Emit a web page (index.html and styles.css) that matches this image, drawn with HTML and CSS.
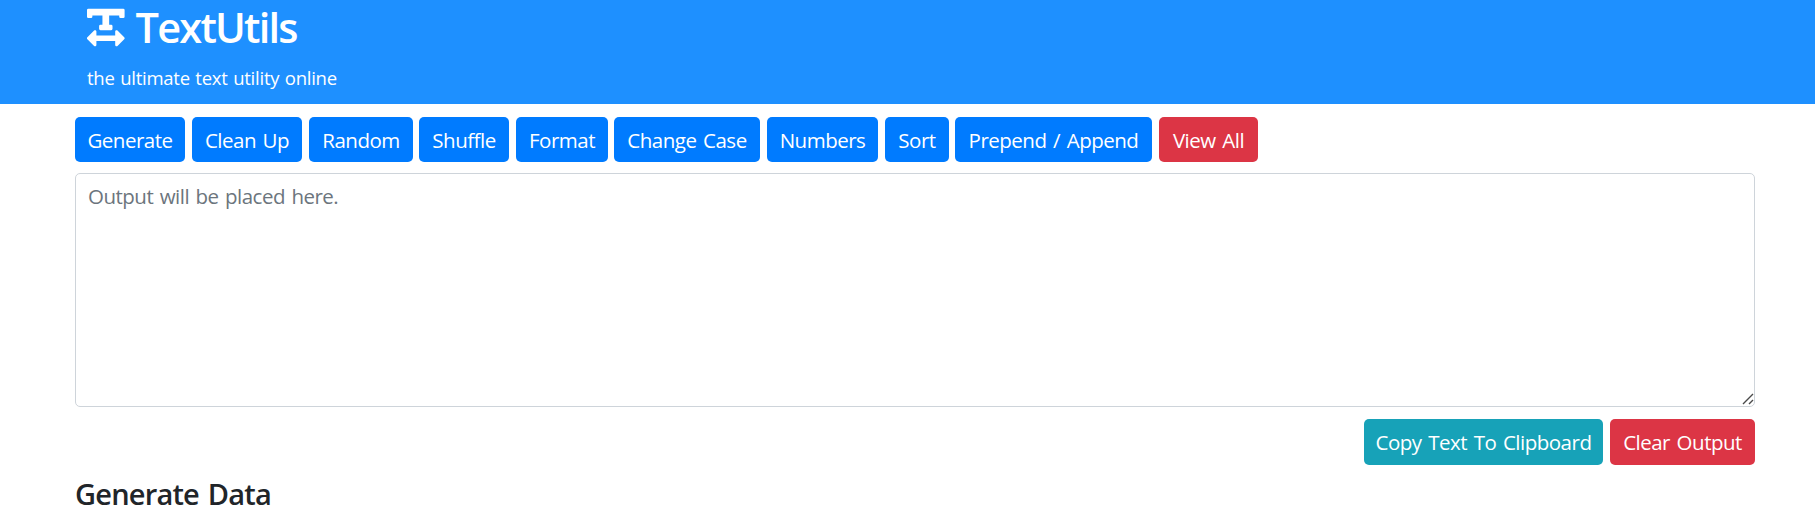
FILE: index.html
```html
<!DOCTYPE html>
<html lang="en">
<head>
<meta charset="utf-8">
<title>TextUtils</title>
<link rel="stylesheet" href="styles.css">
</head>
<body>
<header class="header">
  <h1 class="brand">
    <svg class="brand-icon" viewBox="0 0 448 512" fill="currentColor" aria-hidden="true"><path d="M432 32H16A16 16 0 0 0 0 48v80a16 16 0 0 0 16 16h32a16 16 0 0 0 16-16v-16h120v112h-24a16 16 0 0 0-16 16v32a16 16 0 0 0 16 16h128a16 16 0 0 0 16-16v-32a16 16 0 0 0-16-16h-24V112h120v16a16 16 0 0 0 16 16h32a16 16 0 0 0 16-16V48a16 16 0 0 0-16-16zm-68.69 260.69C354 283.36 336 288.36 336 304v48H112v-48c0-14.31-17.31-21.32-27.31-11.31l-80 80a16 16 0 0 0 0 22.62l80 80C94 484.64 112 479.64 112 464v-48h224v48c0 14.31 17.31 21.33 27.31 11.31l80-80a16 16 0 0 0 0-22.62z"/></svg>
    <span>TextUtils</span>
  </h1>
  <p class="tagline">the ultimate text utility online</p>
</header>
<main class="container">
  <nav class="toolbar">
    <button class="btn btn-primary generate">Generate</button>
    <button class="btn btn-primary cleanup">Clean Up</button>
    <button class="btn btn-primary random">Random</button>
    <button class="btn btn-primary shuffle">Shuffle</button>
    <button class="btn btn-primary format">Format</button>
    <button class="btn btn-primary case">Change Case</button>
    <button class="btn btn-primary numbers">Numbers</button>
    <button class="btn btn-primary sort">Sort</button>
    <button class="btn btn-primary prepend">Prepend / Append</button>
    <button class="btn btn-danger viewall">View All</button>
  </nav>
  <div class="output-wrap">
    <textarea class="output" placeholder="Output will be placed here."></textarea>
    <svg class="grip" viewBox="0 0 12 12" aria-hidden="true"><path d="M1 11L11 1M7 11l4-4"/></svg>
  </div>
  <div class="actions">
    <button class="btn btn-info copy">Copy Text To Clipboard</button>
    <button class="btn btn-danger clear">Clear Output</button>
  </div>
  <h2 class="section-title">Generate Data</h2>
</main>
</body>
</html>
```
FILE: styles.css
```css
* { box-sizing: border-box; }
body {
  margin: 0;
  background: #fff;
  color: #212529;
  font-family: "Open Sans", "Noto Sans", sans-serif;
  font-size: 20.5px;
}
.header {
  height: 104px;
  padding: 0 87px;
  background: #1e90ff;
  color: #fff;
}
.brand {
  display: flex;
  gap: 11px;
  height: 55px;
  margin: 0;
  font-size: 41.5px;
  font-weight: 600;
  line-height: 54px;
  letter-spacing: -1.8px;
}
.brand-icon { flex: none; width: 37.6px; height: 43px; margin-top: 6px; }
.tagline {
  margin: 9px 0 0;
  font-size: 18.5px;
  line-height: 28px;
  letter-spacing: -0.25px;
  word-spacing: 1px;
}
.container { padding: 13px 60px 0 75px; }
.toolbar { display: flex; }
.btn {
  flex: none;
  height: 45px;
  padding: 1px 0 0;
  border: 0;
  border-radius: 5px;
  color: #fff;
  font: inherit;
  line-height: 45px;
  letter-spacing: -0.5px;
  word-spacing: 1.8px;
  white-space: nowrap;
}
.btn-primary { background: #007bff; }
.btn-danger { background: #dc3545; }
.btn-info { background: #17a2b8; }
.generate { width: 110px; margin-right: 7px; }
.cleanup { width: 110px; margin-right: 7px; }
.random { width: 104px; margin-right: 6px; }
.shuffle { width: 90px; margin-right: 7px; }
.format { width: 92px; margin-right: 6px; }
.case { width: 146px; margin-right: 7px; }
.numbers { width: 111px; margin-right: 7px; }
.sort { width: 64px; margin-right: 6px; }
.prepend { width: 197px; margin-right: 7px; }
.viewall { width: 99px; }
.output-wrap { position: relative; margin: 11px 0 12px; }
.output {
  display: block;
  width: 100%;
  height: 234px;
  padding: 6px 12px;
  border: 1px solid #ced4da;
  border-radius: 5px;
  background: #fff;
  font: inherit;
  line-height: 32px;
  letter-spacing: -0.5px;
  word-spacing: 1.6px;
  resize: none;
}
.output::placeholder { color: #6c757d; opacity: 1; }
.grip {
  position: absolute;
  right: 1px;
  bottom: 2px;
  width: 12px;
  height: 12px;
  fill: none;
  stroke: #4a4a4a;
  stroke-width: 1.4;
  cursor: nwse-resize;
}
.actions { display: flex; justify-content: flex-end; gap: 7px; }
.actions .btn { height: 46px; padding: 0; }
.copy { width: 239px; }
.clear { width: 145px; }
.section-title {
  margin: 11px 0 0;
  font-size: 29px;
  font-weight: 600;
  line-height: 36px;
  letter-spacing: -0.8px;
  word-spacing: 2px;
}
```
